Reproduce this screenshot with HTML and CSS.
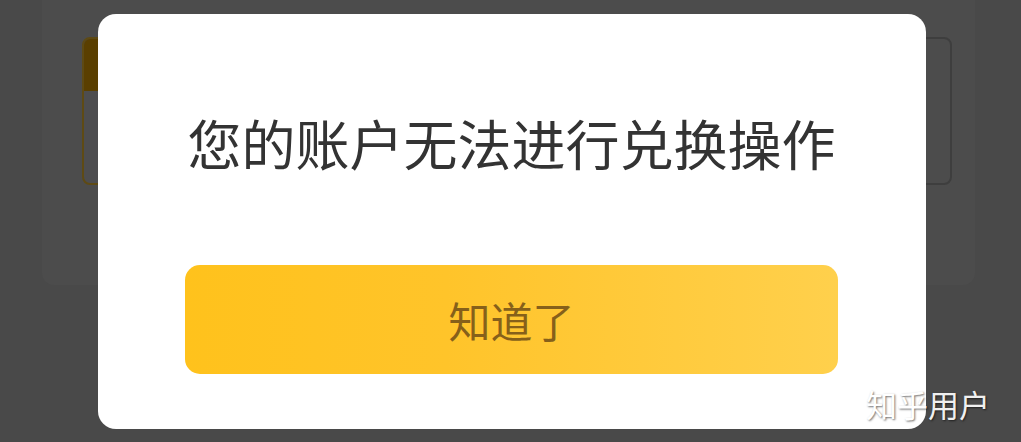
FILE: index.html
```html
<!DOCTYPE html>
<html lang="zh">
<head>
<meta charset="utf-8">
<title>兑换提示</title>
<link rel="stylesheet" href="styles.css">
</head>
<body>
<div class="page">
  <div class="card">
    <div class="box box-left"><div class="box-head"></div></div>
    <div class="box box-right"></div>
  </div>
</div>
<div class="modal">
  <div class="modal-title">您的账户无法进行兑换操作</div>
  <div class="modal-btn">知道了</div>
</div>
<div class="watermark">知乎用户</div>
</body>
</html>
```

FILE: styles.css
```css
html, body {
  margin: 0;
  padding: 0;
}
body {
  width: 1021px;
  height: 442px;
  overflow: hidden;
  background: #494949;
  font-family: "Noto Sans CJK SC", "Noto Sans", sans-serif;
  position: relative;
}
.page {
  padding-left: 42px;
  width: 933px;
}
.card {
  margin-top: -20px;
  height: 305px;
  box-sizing: border-box;
  padding: 57px 23px 0 40px;
  background: #4c4c4c;
  border-radius: 12px;
  display: flex;
  justify-content: space-between;
  align-items: flex-start;
}
.box {
  width: 400px;
  height: 148px;
  box-sizing: border-box;
  border-radius: 8px;
}
.box-left {
  border: 2px solid #5e4a14;
  overflow: hidden;
  background: #4d4d4f;
}
.box-head {
  height: 52px;
  background: #5a3f00;
  border-bottom-right-radius: 14px;
}
.box-right {
  border: 2px solid #3e3e3e;
}
.modal {
  position: absolute;
  left: 98px;
  top: 14px;
  width: 828px;
  height: 415px;
  box-sizing: border-box;
  background: #ffffff;
  border-radius: 18px;
  padding: 96px 88px 0 87px;
}
.modal-title {
  font-size: 54px;
  line-height: 66px;
  color: #333333;
  text-align: center;
  white-space: nowrap;
}
.modal-btn {
  margin-top: 89px;
  height: 109px;
  border-radius: 15px;
  background: linear-gradient(90deg, #ffc21c 0%, #ffc42a 40%, #ffd04c 100%);
  color: #86601a;
  font-size: 42px;
  display: flex;
  align-items: center;
  justify-content: center;
}
.watermark {
  position: absolute;
  left: 866px;
  top: 384px;
  font-size: 31px;
  line-height: 40px;
  color: #ffffff;
  text-shadow: 1px 1px 2px rgba(0,0,0,0.6);
  opacity: 0.92;
}
```
